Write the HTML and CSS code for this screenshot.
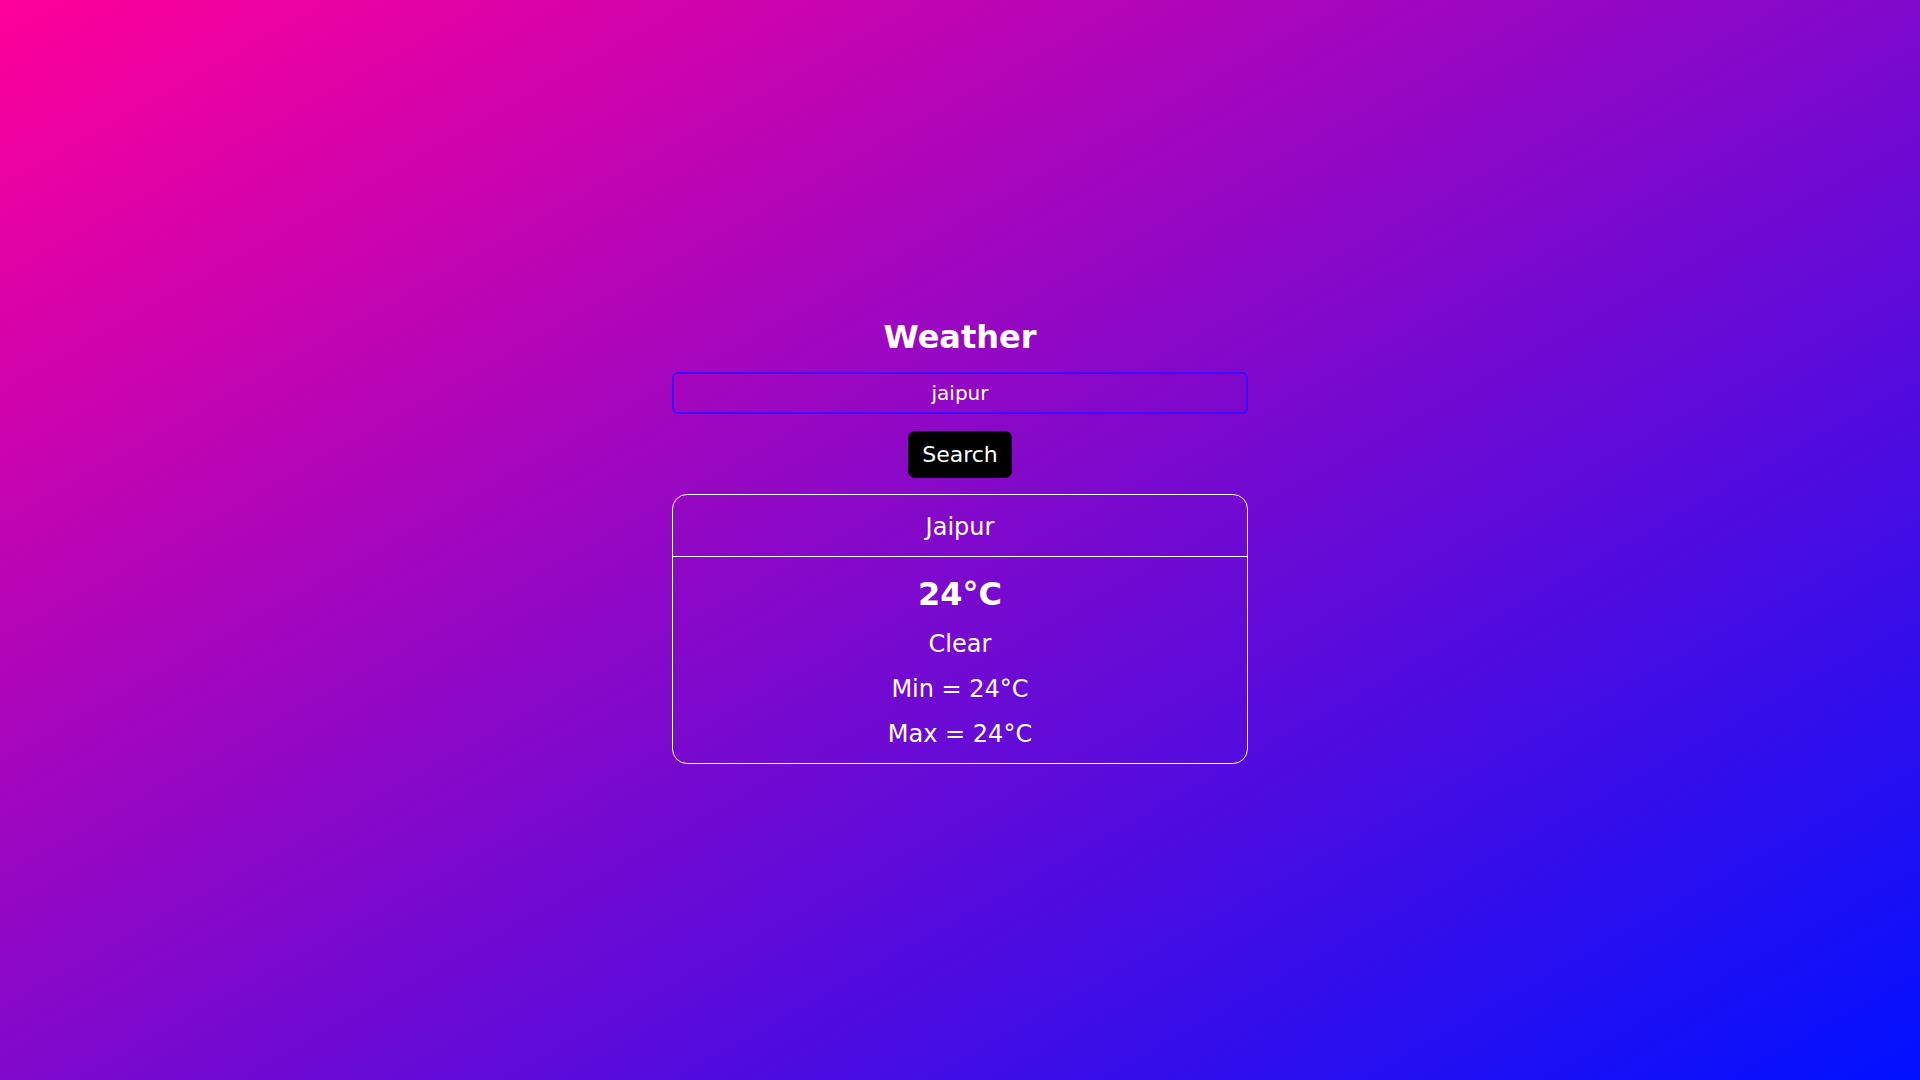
FILE: index.html
```html
<!DOCTYPE html>
<html lang="en">
<head>
<meta charset="utf-8">
<title>Weather</title>
<link rel="stylesheet" href="styles.css">
</head>
<body>
<main class="app">
  <h1 class="title">Weather</h1>
  <input class="city-input" type="text" value="jaipur">
  <button class="search-btn">Search</button>
  <section class="card">
    <div class="card-header">Jaipur</div>
    <div class="card-body">
      <div class="temp">24°C</div>
      <div class="line">Clear</div>
      <div class="line">Min = 24°C</div>
      <div class="line">Max = 24°C</div>
    </div>
  </section>
</main>
</body>
</html>
```
FILE: styles.css
```css
html, body {
  margin: 0;
  padding: 0;
}
body {
  min-height: 100vh;
  background: linear-gradient(to bottom right, #ff0099, #0011ff);
  font-family: "DejaVu Sans", Verdana, sans-serif;
  color: #fff;
  display: flex;
  align-items: center;
  justify-content: center;
}
.app {
  display: flex;
  flex-direction: column;
  align-items: center;
  gap: 17px;
  width: 576px;
}
.title {
  margin: 2px 0 -2px;
  font-size: 32px;
  font-weight: bold;
  line-height: normal;
}
.city-input {
  box-sizing: border-box;
  width: 576px;
  height: 42px;
  margin-top: 1px;
  border: 2px solid #3d0cff;
  border-radius: 6px;
  background: transparent;
  color: #fff;
  font-family: "DejaVu Sans", Verdana, sans-serif;
  font-size: 20px;
  text-align: center;
  padding: 0 10px;
  outline: none;
}
.search-btn {
  box-sizing: border-box;
  height: 47px;
  margin-bottom: -1px;
  padding: 0 14px;
  background: #000;
  color: #fff;
  border: none;
  border-radius: 7px;
  font-family: "DejaVu Sans", Verdana, sans-serif;
  font-size: 22px;
}
.card {
  box-sizing: border-box;
  width: 576px;
  border: 1px solid #fff;
  border-radius: 15px;
  text-align: center;
}
.card-header {
  font-size: 24px;
  padding: 18px 0 14.5px;
  border-bottom: 1px solid #fff;
}
.card-body {
  display: flex;
  flex-direction: column;
  align-items: center;
  gap: 17px;
  padding: 18px 0 15px;
}
.temp {
  font-size: 32px;
  font-weight: bold;
}
.line {
  font-size: 24px;
}
```
